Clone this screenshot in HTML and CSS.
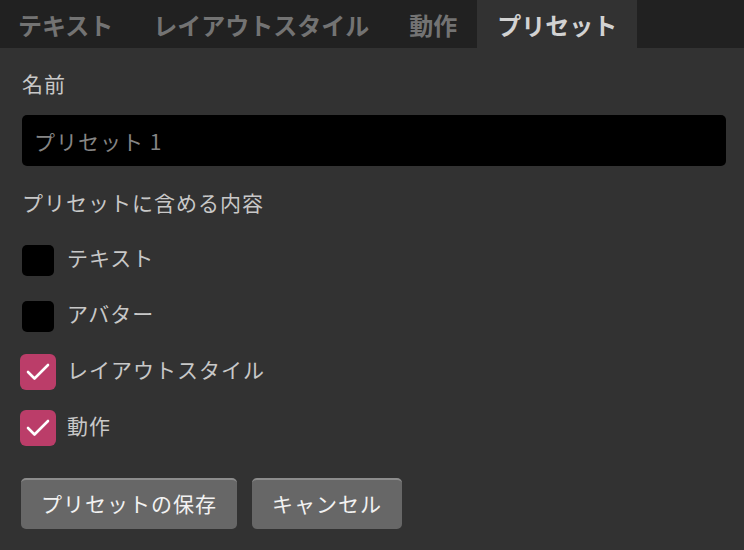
FILE: index.html
```html
<!DOCTYPE html>
<html lang="ja">
<head>
<meta charset="utf-8">
<title>プリセット</title>
<link rel="stylesheet" href="styles.css">
</head>
<body>
<div class="tabs">
  <div class="tab">テキスト</div>
  <div class="tab">レイアウトスタイル</div>
  <div class="tab">動作</div>
  <div class="tab active">プリセット</div>
</div>
<div class="panel">
  <div class="label label-name">名前</div>
  <div class="input">プリセット 1</div>
  <div class="label label-include">プリセットに含める内容</div>
  <div class="checks">
    <div class="row"><span class="box"><span class="empty"></span></span><span class="text">テキスト</span></div>
    <div class="row"><span class="box"><span class="empty"></span></span><span class="text">アバター</span></div>
    <div class="row"><span class="box"><span class="checked"><svg viewBox="0 0 36 36" width="36" height="36"><polyline points="8,18 14.5,24.5 28,11" fill="none" stroke="#fff" stroke-width="2.6" stroke-linecap="round" stroke-linejoin="round"/></svg></span></span><span class="text">レイアウトスタイル</span></div>
    <div class="row"><span class="box"><span class="checked"><svg viewBox="0 0 36 36" width="36" height="36"><polyline points="8,18 14.5,24.5 28,11" fill="none" stroke="#fff" stroke-width="2.6" stroke-linecap="round" stroke-linejoin="round"/></svg></span></span><span class="text">動作</span></div>
  </div>
  <div class="buttons">
    <div class="btn">プリセットの保存</div>
    <div class="btn">キャンセル</div>
  </div>
</div>
</body>
</html>
```
FILE: styles.css
```css
html, body {
  margin: 0;
  padding: 0;
}
body {
  background: #323232;
  font-family: "Noto Sans CJK JP", "Noto Sans", sans-serif;
  color: #cacaca;
  width: 744px;
  height: 550px;
  overflow: hidden;
}
.tabs {
  display: flex;
  height: 48px;
  background: #212121;
}
.tab {
  display: flex;
  align-items: center;
  padding: 0 20px;
  font-size: 24px;
  font-weight: bold;
  color: #737373;
}
.tab:first-child {
  padding-left: 18px;
}
.tab.active {
  background: #323232;
  color: #d2d2d2;
}
.panel {
  display: flex;
  flex-direction: column;
  align-items: flex-start;
  padding: 0 18px 0 22px;
}
.label {
  font-size: 21px;
  letter-spacing: 1px;
  line-height: 30px;
  color: #c8c8c8;
}
.label-name {
  margin-top: 20px;
}
.input {
  align-self: stretch;
  margin-top: 17px;
  height: 51px;
  background: #000;
  border-radius: 5px;
  box-sizing: border-box;
  padding: 0 12px;
  display: flex;
  align-items: center;
  font-size: 21px;
  letter-spacing: 1px;
  color: #858585;
}
.label-include {
  margin-top: 21px;
}
.checks {
  display: flex;
  flex-direction: column;
  gap: 20px;
  margin-top: 25px;
  margin-left: -2px;
}
.row {
  display: flex;
  align-items: center;
  height: 36px;
}
.box {
  width: 36px;
  height: 36px;
  display: flex;
  align-items: center;
  justify-content: center;
}
.empty {
  width: 32px;
  height: 31px;
  background: #000;
  border-radius: 5px;
}
.checked {
  width: 36px;
  height: 36px;
  background: #bb3d69;
  border-radius: 6px;
  display: block;
}
.checked svg {
  display: block;
}
.text {
  margin-left: 11px;
  padding-bottom: 6px;
  font-size: 21px;
  letter-spacing: 1px;
  color: #c8c8c8;
}
.buttons {
  display: flex;
  gap: 15px;
  margin-top: 32px;
  margin-left: -1px;
}
.btn {
  height: 51px;
  box-sizing: border-box;
  padding: 0 20px 4px;
  display: flex;
  align-items: center;
  background: #676767;
  border-top: 2px solid #8c8c8c;
  border-radius: 5px;
  font-size: 21px;
  letter-spacing: 1px;
  color: #f2f2f2;
}
```
